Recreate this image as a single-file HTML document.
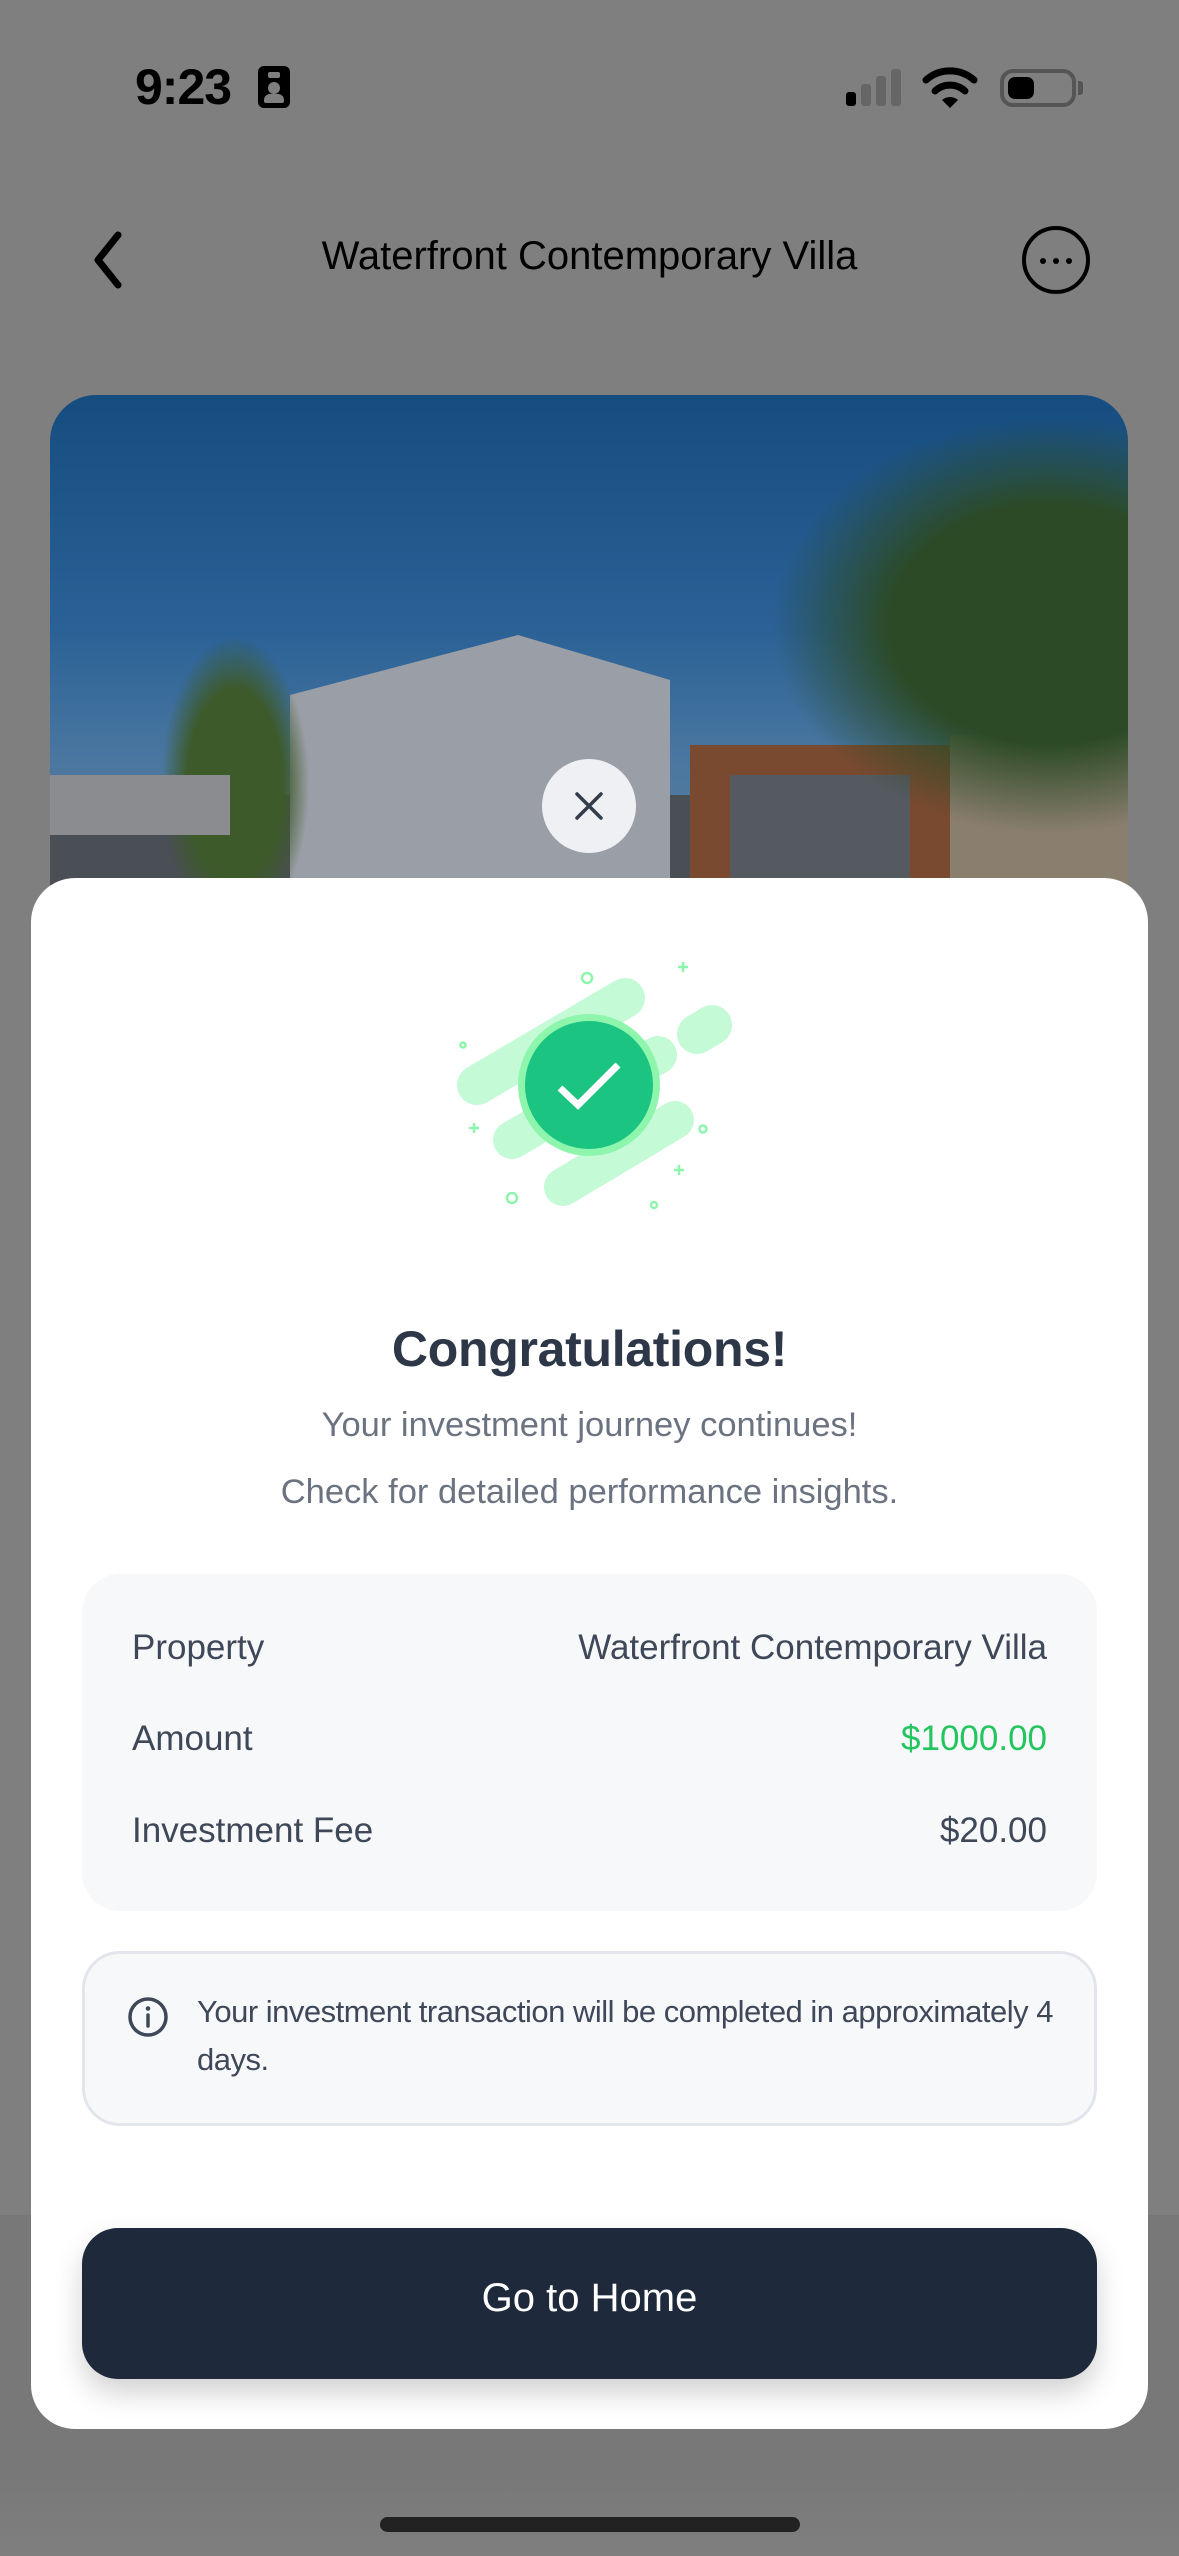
<!DOCTYPE html>
<html><head><meta charset="utf-8">
<style>
*{margin:0;padding:0;box-sizing:border-box}
body{width:1179px;height:2556px;background:#7f7f7f;position:relative;overflow:hidden;font-family:"Liberation Sans",sans-serif}
.abs{position:absolute}
.t{font-family:"Liberation Sans",sans-serif}
</style></head><body>
<div class="abs" style="left:0;top:2215px;width:1179px;height:260px;background:#787878"></div>
<div class="abs" style="left:0;top:2475px;width:1179px;height:81px;background:linear-gradient(#787878,#7f7f7f)"></div>

<!-- status bar -->
<div class="abs t" style="left:135px;top:58px;font-size:50px;font-weight:bold;color:#000;letter-spacing:-1px">9:23</div>
<div class="abs" style="left:258px;top:66px;width:32px;height:42px;background:#000;border-radius:6px">
 <div class="abs" style="left:10px;top:6px;width:12px;height:6px;background:#7f7f7f;border-radius:2px"></div>
 <div class="abs" style="left:10px;top:16px;width:12px;height:12px;background:#7f7f7f;border-radius:6px"></div>
 <div class="abs" style="left:6px;top:28px;width:20px;height:9px;background:#7f7f7f;border-radius:6px 6px 2px 2px"></div>
</div>
<div class="abs" style="left:846px;top:92px;width:10px;height:14px;background:#000;border-radius:3px"></div>
<div class="abs" style="left:861px;top:84px;width:10px;height:22px;background:#666;border-radius:3px"></div>
<div class="abs" style="left:876px;top:76px;width:10px;height:30px;background:#666;border-radius:3px"></div>
<div class="abs" style="left:891px;top:69px;width:10px;height:37px;background:#666;border-radius:3px"></div>
<svg class="abs" style="left:922px;top:64px" width="56" height="46" viewBox="0 0 56 46"><path d="M4 16 A36 36 0 0 1 52 16" stroke="#000" stroke-width="7" fill="none" stroke-linecap="round"/><path d="M13 27 A22 22 0 0 1 43 27" stroke="#000" stroke-width="7" fill="none" stroke-linecap="round"/><path d="M20 36 L28 44 L36 36 A12 12 0 0 0 20 36Z" fill="#000"/></svg>
<div class="abs" style="left:1000px;top:69px;width:76px;height:38px;border:4px solid #555;border-radius:13px"><div class="abs" style="left:4px;top:4px;width:26px;height:22px;background:#000;border-radius:7px"></div></div>
<div class="abs" style="left:1078px;top:81px;width:5px;height:14px;background:#555;border-radius:0 3px 3px 0"></div>

<!-- nav -->
<svg class="abs" style="left:88px;top:228px" width="40" height="64" viewBox="0 0 40 64"><path d="M30 7 L10 32 L30 57" stroke="#000" stroke-width="7" fill="none" stroke-linecap="round" stroke-linejoin="round"/></svg>
<div class="abs t" style="left:0;width:1179px;top:234px;text-align:center;font-size:40px;color:#000">Waterfront Contemporary Villa</div>
<div class="abs" style="left:1022px;top:226px;width:68px;height:68px;border:4px solid #000;border-radius:50%"></div>
<div class="abs" style="left:1040px;top:258px;width:6px;height:6px;background:#000;border-radius:50%"></div>
<div class="abs" style="left:1053px;top:258px;width:6px;height:6px;background:#000;border-radius:50%"></div>
<div class="abs" style="left:1066px;top:258px;width:6px;height:6px;background:#000;border-radius:50%"></div>

<!-- photo -->
<div class="abs" style="left:50px;top:395px;width:1078px;height:520px;border-radius:46px 46px 0 0;overflow:hidden;background:linear-gradient(180deg,#164d80 0%,#2a6196 45%,#4a77a0 70%,#5f7f98 100%)">
 <div class="abs" style="left:0;top:400px;width:1078px;height:200px;background:#4a4e55"></div>
 <div class="abs" style="left:240px;top:240px;width:380px;height:300px;background:#9a9ea6;clip-path:polygon(0 20%,60% 0,100% 15%,100% 100%,0 100%)"></div>
 <div class="abs" style="left:640px;top:350px;width:260px;height:200px;background:#7a4a30"></div>
 <div class="abs" style="left:680px;top:380px;width:180px;height:160px;background:#555a60"></div>
 <div class="abs" style="left:900px;top:340px;width:178px;height:200px;background:#8a7e6e"></div>
 <div class="abs" style="left:720px;top:20px;width:400px;height:420px;background:radial-gradient(ellipse at 70% 50%,#2c4a25 0%,#2c4a25 40%,rgba(44,74,37,0) 70%)"></div>
 <div class="abs" style="left:110px;top:240px;width:150px;height:300px;background:radial-gradient(ellipse,#3d5a2a 0%,#3d5a2a 45%,rgba(61,90,42,0) 70%)"></div>
 <div class="abs" style="left:-20px;top:380px;width:200px;height:60px;background:#8a8c90"></div>
</div>

<!-- close -->
<div class="abs" style="left:542px;top:759px;width:94px;height:94px;border-radius:50%;background:#eef0f4"></div>
<svg class="abs" style="left:573px;top:790px" width="32" height="32" viewBox="0 0 32 32"><path d="M4 4L28 28M28 4L4 28" stroke="#333c4a" stroke-width="3.5" stroke-linecap="round"/></svg>

<!-- sheet -->
<div class="abs" style="left:31px;top:878px;width:1117px;height:1551px;background:#fff;border-radius:44px"></div>

<svg class="abs" style="left:0;top:0" width="1179" height="1300" viewBox="0 0 1179 1300">
 <g stroke="#c4fad6" stroke-linecap="round" fill="none">
  <line x1="477" y1="1085" x2="625" y2="998" stroke-width="40"/>
  <line x1="697" y1="1034" x2="712" y2="1025" stroke-width="40"/>
  <line x1="512" y1="1140" x2="658" y2="1055" stroke-width="38"/>
  <line x1="563" y1="1187" x2="675" y2="1120" stroke-width="38"/>
 </g>
 <circle cx="589" cy="1085" r="71" fill="#8ef5ad"/>
 <circle cx="589" cy="1085" r="64" fill="#1bc480"/>
 <path d="M560 1088 L578 1105 L618 1065" stroke="#fff" stroke-width="7" fill="none"/>
 <g stroke="#8ef5ad" fill="none" stroke-width="2.5">
  <circle cx="587" cy="978" r="5"/><circle cx="463" cy="1045" r="2.5"/><circle cx="703" cy="1129" r="3.5"/><circle cx="512" cy="1198" r="5"/><circle cx="654" cy="1205" r="3"/>
  <path d="M678 967h10M683 962v10M469 1128h10M474 1123v10M674 1170h10M679 1165v10"/>
 </g>
</svg>

<div class="abs t" style="left:0;width:1179px;top:1320px;text-align:center;font-size:50px;font-weight:bold;color:#2d3748;letter-spacing:-0.3px">Congratulations!</div>
<div class="abs t" style="left:0;width:1179px;top:1406px;text-align:center;font-size:34.5px;color:#6b7280">Your investment journey continues!</div>
<div class="abs t" style="left:0;width:1179px;top:1473px;text-align:center;font-size:34.5px;color:#6b7280">Check for detailed performance insights.</div>

<div class="abs" style="left:82px;top:1574px;width:1015px;height:337px;background:#f7f8fa;border-radius:38px"></div>
<div class="abs t" style="left:132px;top:1628px;font-size:35px;color:#3f4858">Property</div>
<div class="abs t" style="right:132px;top:1628px;font-size:35px;color:#3f4858">Waterfront Contemporary Villa</div>
<div class="abs t" style="left:132px;top:1719px;font-size:35px;color:#3f4858">Amount</div>
<div class="abs t" style="right:132px;top:1719px;font-size:35px;color:#22c55e">$1000.00</div>
<div class="abs t" style="left:132px;top:1811px;font-size:35px;color:#3f4858">Investment Fee</div>
<div class="abs t" style="right:132px;top:1811px;font-size:35px;color:#3f4858">$20.00</div>

<div class="abs" style="left:82px;top:1951px;width:1015px;height:175px;background:#f7f8fa;border:3px solid #e2e6ec;border-radius:38px"></div>
<svg class="abs" style="left:127px;top:1996px" width="42" height="42" viewBox="0 0 42 42"><circle cx="21" cy="21" r="18" stroke="#3f4858" stroke-width="3.5" fill="none"/><line x1="21" y1="19" x2="21" y2="30" stroke="#3f4858" stroke-width="3.5" stroke-linecap="round"/><circle cx="21" cy="12.5" r="2.3" fill="#3f4858"/></svg>
<div class="abs t" style="left:197px;top:1988px;width:880px;font-size:31px;line-height:48px;color:#3f4858;letter-spacing:-0.5px">Your investment transaction will be completed in approximately 4 days.</div>

<div class="abs" style="left:82px;top:2228px;width:1015px;height:151px;background:#1e293b;border-radius:36px;box-shadow:0 14px 28px rgba(0,0,0,0.18)"></div>
<div class="abs t" style="left:82px;width:1015px;top:2276px;text-align:center;font-size:40px;color:#fff">Go to Home</div>

<div class="abs" style="left:380px;top:2517px;width:420px;height:15px;background:#222;border-radius:8px"></div>
</body></html>
